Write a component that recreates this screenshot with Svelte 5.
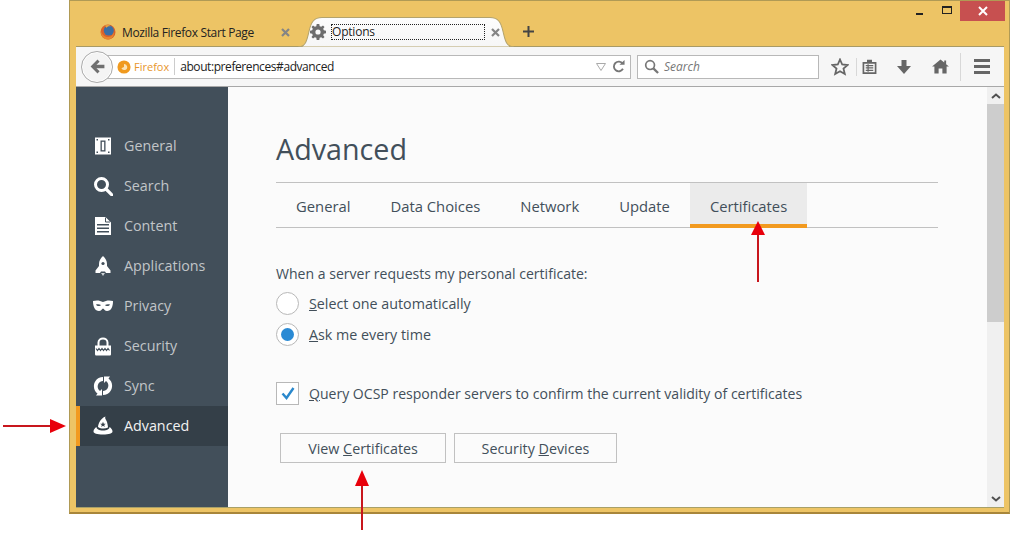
<script>
  const sideItems = ["General", "Search", "Content", "Applications", "Privacy", "Security", "Sync", "Advanced"];
  const tabs = ["General", "Data Choices", "Network", "Update", "Certificates"];
</script>

<div class="page">
  <div class="window">
    <div class="titlebar">
      <div class="tabstrip">
        <div class="tab first">
          <svg class="favicon" viewBox="0 0 16 16" width="16" height="16">
            <circle cx="8" cy="8" r="7.5" fill="#d9622b" />
            <circle cx="8.8" cy="6.6" r="5" fill="#3a6ea5" />
            <path d="M1 7C2 11 5 13 8 13C11 13 13 11 14 8C14 13 11 15.500 8 15.500C4 15.500 .5 12 1 7Z" fill="#e8862e" />
            <path d="M5 1.500C7 .5 10 1 11 2.500C9 2 7 2.500 6.500 4Z" fill="#e9a13b" />
          </svg>
          <span class="tabtitle">Mozilla Firefox Start Page</span>
          <svg class="tabclose" viewBox="0 0 9 9" width="9" height="9"><path d="M1 1L8 8M8 1L1 8" stroke="#858585" stroke-width="2.200" /></svg>
        </div>
        <div class="tab active">
          <svg class="tabshape" viewBox="0 0 216 29" width="216" height="30" preserveAspectRatio="none">
            <defs>
              <linearGradient id="tabfill" x1="0" y1="0" x2="0" y2="1">
                <stop offset="0" stop-color="#fdfdfd" />
                <stop offset="1" stop-color="#f6f6f6" />
              </linearGradient>
            </defs>
            <path d="M0 29C8 29 9 22 11 14C13 5 16 0.500 24 0.500H192C200 0.500 203 5 205 14C207 22 208 29 216 29Z" fill="url(#tabfill)" stroke="#b3a36d" />
          </svg>
          <svg class="gear" viewBox="0 0 16 16" width="16" height="16">
            <path fill-rule="evenodd" fill="#6d6d6d" d="M6.700 0H9.300L9.700 2.200L11.200 2.800L13 1.500L14.500 3L13.200 4.800L13.800 6.300L16 6.700V9.300L13.800 9.700L13.200 11.200L14.500 13L13 14.500L11.200 13.200L9.700 13.800L9.300 16H6.700L6.300 13.800L4.800 13.200L3 14.500L1.500 13L2.800 11.200L2.200 9.700L0 9.300V6.700L2.200 6.300L2.800 4.800L1.500 3L3 1.500L4.800 2.800L6.300 2.200ZM8 5.400A2.600 2.600 0 1 0 8 10.600A2.600 2.600 0 1 0 8 5.400Z" />
          </svg>
          <span class="tabtitle focused">Options</span>
          <svg class="tabclose" viewBox="0 0 9 9" width="9" height="9"><path d="M1 1L8 8M8 1L1 8" stroke="#858585" stroke-width="2.200" /></svg>
        </div>
        <svg class="newtab" viewBox="0 0 11 11" width="11" height="11"><path d="M5.500 0V11M0 5.500H11" stroke="#444" stroke-width="2" /></svg>
      </div>
      <div class="winctrls">
        <span class="ctrl"><i class="min"></i></span>
        <span class="ctrl"><i class="max"></i></span>
        <span class="ctrl close">
          <svg viewBox="0 0 10 10" width="10" height="10"><path d="M1 1L9 9M9 1L1 9" stroke="#fff" stroke-width="2" /></svg>
        </span>
      </div>
    </div>

    <div class="inner">
      <div class="navbar">
        <div class="back">
          <svg viewBox="0 0 16 16" width="17" height="17"><path d="M8 1.500L1.500 8L8 14.500L10 12.500L7 9.700H14.500V6.300H7L10 3.500Z" fill="#6f6f6f" /></svg>
        </div>
        <div class="urlbar">
          <svg class="fxmark" viewBox="0 0 16 16" width="14" height="14">
            <circle cx="8" cy="8" r="7.500" fill="#f09a1f" />
            <path d="M8 4.500A3.500 3.500 0 1 1 5 9.500L8 8Z" fill="#fbe3b5" />
          </svg>
          <span class="identity">Firefox</span>
          <span class="url">about:preferences#advanced</span>
          <svg class="dropmark" viewBox="0 0 10 8" width="10" height="8"><path d="M.5 .5H9.500L5 7.500Z" fill="none" stroke="#aaa" /></svg>
          <svg class="reload" viewBox="0 0 14 14" width="13" height="13">
            <path d="M11.500 4A5.200 5.200 0 1 0 11.800 9.500" fill="none" stroke="#777" stroke-width="2" />
            <path d="M8 5H13.500V0Z" fill="#777" />
          </svg>
        </div>
        <div class="searchbar">
          <svg viewBox="0 0 16 16" width="15" height="15">
            <circle cx="6.500" cy="6.500" r="4.700" fill="none" stroke="#777" stroke-width="1.800" />
            <path d="M10 10L15 15" stroke="#777" stroke-width="2.400" />
          </svg>
          <em>Search</em>
        </div>
        <div class="tools">
          <svg class="star" viewBox="0 0 18 18" width="18" height="18">
            <path d="M9 1.500L11.200 6.500L16.700 7L12.500 10.600L13.800 16L9 13.200L4.200 16L5.500 10.600L1.300 7L6.800 6.500Z" fill="none" stroke="#666" stroke-width="1.800" />
          </svg>
          <i class="sep one"></i>
          <svg class="clip" viewBox="0 0 16 16" width="15" height="16">
            <path d="M1.500 3.500H14.500V14.500H1.500Z" fill="none" stroke="#666" stroke-width="1.800" />
            <path d="M6 1H10V3H6ZM4 6.500H12M4 9H12M4 11.500H12M6.500 5V13" stroke="#666" stroke-width="1.300" fill="#666" />
          </svg>
          <svg class="down" viewBox="0 0 16 16" width="16" height="16"><path d="M5.500 1H10.500V7H15L8 15L1 7H5.500Z" fill="#666" /></svg>
          <svg class="home" viewBox="0 0 18 16" width="17" height="15">
            <path d="M9 .5L13 3.800V1.500H15V5.500L18 8H15.500V15.500H11V10H7V15.500H2.500V8H0Z" fill="#666" />
          </svg>
          <i class="sep two"></i>
          <div class="burger"><i></i><i></i><i></i></div>
        </div>
      </div>

      <div class="browser">
        <nav class="sidebar">
          {#each sideItems as item}
            <div class="sideitem" class:selected={item === "Advanced"}>
              <svg viewBox="0 0 20 20" width="20" height="20">
                {#if item === "General"}
                  <path fill-rule="evenodd" fill="#fff" d="M2 1.500H18V18.500H2ZM7.500 4.500V15.500H12.500V4.500Z" />
                  <path d="M8.800 5.800H11.200V14.200H8.800Z" fill="#fff" />
                  <path d="M3.500 3H5V4.500H3.500ZM15 3H16.500V4.500H15ZM3.500 15.500H5V17H3.500ZM15 15.500H16.500V17H15Z" fill="#424f5a" />
                {:else if item === "Search"}
                  <circle cx="8.500" cy="8.500" r="6" fill="none" stroke="#fff" stroke-width="3" />
                  <path d="M13 13L19 19" stroke="#fff" stroke-width="3.200" stroke-linecap="round" />
                {:else if item === "Content"}
                  <path fill-rule="evenodd" fill="#fff" d="M2 1H12.500L18 6.500V19H2ZM4 8V9.500H16V8ZM4 11.500V13H16V11.500ZM4 15V16.500H16V15Z" />
                  <path d="M12.500 1.500V6H17" fill="none" stroke="#424f5a" />
                {:else if item === "Applications"}
                  <path fill="#fff" d="M10 0C12.500 2 14 5 14 8V10L17.500 14.500V17H13L12 15.500H8L7 17H2.500V14.500L6 10V8C6 5 7.500 2 10 0Z" />
                  <circle cx="10" cy="7.500" r="1.600" fill="#424f5a" />
                  <path d="M8 17H12L10 20Z" fill="#cdd2d6" />
                {:else if item === "Privacy"}
                  <path fill-rule="evenodd" fill="#fff" d="M0 5C4 4 7 4.500 10 6C13 4.500 16 4 20 5C20 11 18 15 14 15C12 15 11 13 10 12.500C9 13 8 15 6 15C2 15 0 11 0 5ZM3 8.500C4 10.500 7 10.500 8 9C6.500 8 4.500 8 3 8.500ZM12 9C13 10.500 16 10.500 17 8.500C15.500 8 13.500 8 12 9Z" />
                {:else if item === "Security"}
                  <path fill="none" stroke="#fff" stroke-width="2" d="M5.500 10V6.500C5.500 1 14.500 1 14.500 6.500V10" />
                  <path fill="#fff" d="M2 9.500H18V18C18 19 17.500 19.500 16.500 19.500H3.500C2.500 19.500 2 19 2 18Z" />
                  <path d="M3 12.500L4.500 14.500L6 12.500L7.500 14.500L9 12.500L10.500 14.500L12 12.500L13.500 14.500L15 12.500L16.500 14.500" fill="none" stroke="#424f5a" stroke-width="1.100" />
                {:else if item === "Sync"}
                  <path fill="#fff" d="M10 1C7 1 4 2.500 2.500 5C-.5 9.500 1 15 4.500 17.500L3 19.500H9V13L7 15C4.500 13 4 10 5.500 7.500C6.500 6 8 5 10 5ZM10 19C13 19 16 17.500 17.500 15C20.500 10.500 19 5 15.500 2.500L17 .5H11V7L13 5C15.500 7 16 10 14.500 12.500C13.500 14 12 15 10 15Z" />
                {:else}
                  <path fill="#fff" d="M5 11C5.500 7 7.500 2.500 12.500 .5C11.500 2.500 13 3 14 6C14.500 8 15 10 15 11.500C12 13 8 13 5 11Z" />
                  <path fill="#364049" d="M10 5.800L10.800 7.800H12.800L11.200 9L11.800 11L10 9.800L8.200 11L8.800 9L7.200 7.800H9.200Z" />
                  <path fill="#fff" d="M3.500 11C2 12 .5 13.500 .5 15.500C.5 17.500 4 18.500 10 18.500C16 18.500 19.500 17.500 19.500 15.500C19.500 13.500 18 12 16.500 11C16.500 13 14 14.500 10 14.500C6 14.500 3.500 13 3.500 11Z" />
                {/if}
              </svg>
              <span>{item}</span>
            </div>
          {/each}
        </nav>

        <main class="content">
          <h1>Advanced</h1>
          <div class="tabbar">
            {#each tabs as tab}
              <div class="prefstab" class:current={tab === "Certificates"}>{tab}</div>
            {/each}
          </div>

          <p class="caption">When a server requests my personal certificate:</p>
          <label class="row radio-row">
            <span class="radio"></span>
            <span><u>S</u>elect one automatically</span>
          </label>
          <label class="row radio-row">
            <span class="radio on"></span>
            <span><u>A</u>sk me every time</span>
          </label>
          <label class="row check-row">
            <span class="check">
              <svg viewBox="0 0 16 16" width="16" height="16"><path d="M2.500 8.500L6.500 13L13.500 3" fill="none" stroke="#2a88cc" stroke-width="2.400" /></svg>
            </span>
            <span><u>Q</u>uery OCSP responder servers to confirm the current validity of certificates</span>
          </label>
          <div class="buttons">
            <div class="btn view">View <u>C</u>ertificates</div>
            <div class="btn devices">Security <u>D</u>evices</div>
          </div>
        </main>

        <div class="scrollbar">
          <svg class="arrow" viewBox="0 0 10 6" width="10" height="6"><path d="M1 5L5 1.500L9 5" fill="none" stroke="#505050" stroke-width="2" /></svg>
          <div class="thumb"></div>
          <svg class="arrow bottom" viewBox="0 0 10 6" width="10" height="6"><path d="M1 1L5 4.500L9 1" fill="none" stroke="#505050" stroke-width="2" /></svg>
        </div>
      </div>
    </div>
  </div>

  <!-- red annotation arrows drawn on top of the screenshot -->
  <svg class="notes" width="1010" height="533" viewBox="0 0 1010 533">
    <path d="M3 426H52" stroke="#c8161d" stroke-width="2" />
    <path d="M50 419L66 426L50 433Z" fill="#e8000b" />
    <path d="M758 282V234" stroke="#c8161d" stroke-width="2" />
    <path d="M751 235L758 221L765 235Z" fill="#e8000b" />
    <path d="M362 530V485" stroke="#c8161d" stroke-width="2" />
    <path d="M355 486L362 470L369 486Z" fill="#e8000b" />
  </svg>
</div>

<style>
  :global(body) {
    margin: 0;
    background: #fff;
  }

  .page {
    position: relative;
    width: 1010px;
    height: 533px;
    overflow: hidden;
    font-family: "Open Sans", "Liberation Sans", sans-serif;
  }

  .window {
    box-sizing: border-box;
    margin-left: 69px;
    width: 941px;
    height: 514px;
    background: #edc465;
    border: 1px solid #b09a55;
    border-bottom: 2px solid #a8863a;
    padding: 0 5px 4px 6px;
    display: flex;
    flex-direction: column;
  }

  .titlebar {
    height: 45px;
    flex: none;
    display: flex;
    justify-content: space-between;
    position: relative;
    z-index: 1;
  }

  .tabstrip {
    display: flex;
    align-items: flex-end;
    padding-left: 24px;
  }

  .tab {
    position: relative;
    height: 30px;
    margin-bottom: -1px;
    display: flex;
    align-items: center;
    font-size: 12px;
    color: #222;
  }

  .tab.first {
    width: 198px;
  }

  .favicon {
    flex: none;
    margin-right: 6px;
  }

  .tabtitle {
    position: relative;
    white-space: nowrap;
    letter-spacing: -.35px;
  }

  .first .tabtitle {
    width: 159px;
  }

  .tabclose {
    position: relative;
    flex: none;
  }

  .tab.active {
    width: 216px;
    padding-left: 13px;
    box-sizing: border-box;
  }

  .tabshape {
    position: absolute;
    left: 0;
    top: 0;
  }

  .gear {
    position: relative;
    margin-left: -1px;
    margin-right: 5px;
  }

  .focused {
    box-sizing: border-box;
    width: 154px;
    height: 16px;
    line-height: 14px;
    letter-spacing: -.2px;
    border: 1px dotted #222;
    margin-right: 6px;
  }

  .newtab {
    margin: 0 0 9px 9px;
  }

  .winctrls {
    display: flex;
    align-items: flex-start;
    margin-right: -1px;
  }

  .ctrl {
    width: 28px;
    height: 20px;
    display: flex;
    align-items: center;
    justify-content: center;
  }

  .ctrl i {
    display: block;
  }

  .min {
    width: 7px;
    height: 2px;
    background: #222;
    margin-top: 6px;
  }

  .max {
    box-sizing: border-box;
    width: 10px;
    height: 8px;
    border: 1px solid #222;
    border-top-width: 2px;
    margin-top: -2px;
  }

  .ctrl.close {
    width: 45px;
    background: #c75050;
    margin-left: -1px;
  }

  .inner {
    flex: 1;
    min-height: 0;
    display: flex;
    flex-direction: column;
    border-top: 1px solid #a89a66;
    border-bottom: 1px solid #a8a068;
  }

  .navbar {
    flex: none;
    height: 40px;
    box-sizing: border-box;
    background: #f6f6f6;
    border-bottom: 1px solid #a8a8a8;
    display: flex;
    align-items: center;
    padding-left: 4px;
    position: relative;
  }

  .back {
    width: 32px;
    height: 32px;
    box-sizing: border-box;
    margin-left: 1px;
    border-radius: 50%;
    background: #f4f4f4;
    border: 1px solid #aaa;
    box-shadow: 0 0 0 1px #fff inset;
    display: flex;
    align-items: center;
    justify-content: center;
    position: relative;
    z-index: 1;
    flex: none;
  }

  .urlbar {
    width: 535px;
    height: 24px;
    box-sizing: border-box;
    margin-left: -17px;
    padding-left: 20px;
    background: #fff;
    border: 1px solid #b8b8b8;
    display: flex;
    align-items: center;
    font-size: 12px;
    color: #222;
  }

  .fxmark {
    flex: none;
    margin-right: 3px;
  }

  .identity {
    color: #e8962c;
    font-size: 11px;
    padding-right: 5px;
    border-right: 1px solid #ccc;
    margin-right: 5px;
    line-height: 17px;
  }

  .url {
    flex: 1;
    letter-spacing: -.42px;
  }

  .dropmark {
    margin-right: 6px;
  }

  .reload {
    margin-right: 5px;
  }

  .searchbar {
    width: 182px;
    height: 24px;
    box-sizing: border-box;
    margin-left: 6px;
    padding-left: 6px;
    background: #fff;
    border: 1px solid #b8b8b8;
    display: flex;
    align-items: center;
    gap: 5px;
    font-size: 12px;
    color: #777;
  }

  .tools {
    flex: 1;
    align-self: stretch;
    display: flex;
    align-items: center;
    position: relative;
  }

  .tools svg {
    flex: none;
  }

  .star {
    margin-left: 12px;
  }

  .sep {
    width: 1px;
    height: 24px;
    background: #d8d8d8;
    flex: none;
  }

  .sep.one {
    margin: 0 5px 0 7px;
    height: 18px;
  }

  .clip {
    margin-right: 19px;
  }

  .down {
    margin-right: 20px;
  }

  .sep.two {
    margin-left: 11px;
    height: 28px;
  }

  .burger {
    margin-left: 13px;
    display: flex;
    flex-direction: column;
    gap: 3px;
  }

  .burger i {
    display: block;
    width: 16px;
    height: 3px;
    background: #666;
  }

  .browser {
    flex: 1;
    min-height: 0;
    display: flex;
  }

  .sidebar {
    width: 152px;
    flex: none;
    box-sizing: border-box;
    background: #424f5a;
    padding-top: 39px;
  }

  .sideitem {
    height: 40px;
    box-sizing: border-box;
    padding-left: 17px;
    display: flex;
    align-items: center;
    gap: 11px;
    font-size: 14.300px;
    color: #c1c5c8;
  }

  .sideitem span {
    padding-bottom: 2px;
  }

  .sideitem.selected {
    background: #343f48;
    color: #f2f2f2;
    border-left: 4px solid #f29a1f;
    padding-left: 13px;
  }

  .content {
    flex: 1;
    min-width: 0;
    box-sizing: border-box;
    background: #fbfbfb;
    padding: 0 49px 0 48px;
    color: #424f5a;
    font-size: 14.050px;
  }

  h1 {
    margin: 41px 0 0;
    height: 55px;
    line-height: 42px;
    font-size: 28.700px;
    font-weight: 400;
    color: #424f5a;
    box-sizing: border-box;
    border-bottom: 1px solid #c1c1c1;
  }

  .tabbar {
    display: flex;
    height: 45px;
    box-sizing: border-box;
    border-bottom: 1px solid #c1c1c1;
  }

  .prefstab {
    padding: 0 20px;
    line-height: 47px;
    height: 45px;
    box-sizing: border-box;
    font-size: 14.800px;
  }

  .prefstab.current {
    background: #ebebeb;
    border-bottom: 4px solid #f29a1f;
  }

  .caption {
    margin: 36px 0 4px;
    line-height: 20px;
  }

  .row {
    display: flex;
    align-items: center;
    gap: 10px;
  }

  .radio-row {
    height: 31px;
    font-size: 14.300px;
  }

  .radio {
    width: 23px;
    height: 23px;
    box-sizing: border-box;
    border-radius: 50%;
    border: 1px solid #b8b8b8;
    background: #fff;
    position: relative;
    flex: none;
  }

  .radio.on::after {
    content: "";
    position: absolute;
    inset: 4px;
    border-radius: 50%;
    background: #2a8ad4;
  }

  .check-row {
    margin-top: 31px;
    height: 24px;
  }

  .check {
    width: 23px;
    height: 23px;
    box-sizing: border-box;
    border: 1px solid #b8b8b8;
    background: #fff;
    display: flex;
    align-items: center;
    justify-content: center;
    flex: none;
  }

  .buttons {
    display: flex;
    gap: 8px;
    margin: 28px 0 0 4px;
  }

  .btn {
    height: 30px;
    box-sizing: border-box;
    border: 1px solid #c1c1c1;
    background: #fbfbfb;
    display: flex;
    align-items: center;
    justify-content: center;
    white-space: pre;
    font-size: 14.300px;
  }

  .btn.view {
    width: 166px;
  }

  .btn.devices {
    width: 163px;
  }

  .scrollbar {
    width: 17px;
    flex: none;
    background: #f0f0f0;
    position: relative;
    display: flex;
    flex-direction: column;
    align-items: center;
  }

  .arrow {
    margin-top: 6px;
    flex: none;
  }

  .thumb {
    align-self: stretch;
    height: 218px;
    margin-top: 5px;
    background: #cdcdcd;
  }

  .arrow.bottom {
    margin-top: auto;
    margin-bottom: 5px;
  }

  .notes {
    position: absolute;
    left: 0;
    top: 0;
    pointer-events: none;
  }
</style>
